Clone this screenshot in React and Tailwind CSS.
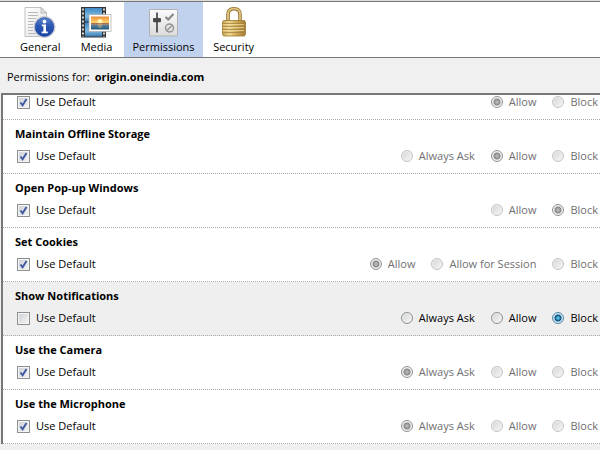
import { useState } from 'react';
import { clsx } from 'clsx';

// --- Icons ---
const GeneralIcon = () => (
  <svg viewBox="0 0 32 32" className="h-8 w-8" aria-hidden="true">
    <defs>
      <linearGradient id="infoBlue" x1="0" y1="0" x2="0" y2="1">
        <stop offset="0" stopColor="#5d86cf" />
        <stop offset="0.450" stopColor="#2c56b4" />
        <stop offset="1" stopColor="#1c46a6" />
      </linearGradient>
      <linearGradient id="sheet" x1="0" y1="0" x2="1" y2="1">
        <stop offset="0" stopColor="#ffffff" />
        <stop offset="1" stopColor="#e2e2e2" />
      </linearGradient>
    </defs>
    <path d="M1 1.500H17L22.500 7V30.500H1Z" fill="url(#sheet)" stroke="#c2c2c2" />
    <path d="M17 1.500V7H22.500Z" fill="#e4e4e4" stroke="#adadad" strokeWidth="0.8" />
    <path d="M4 6.500H14M4 9.500H14M4 12.500H12M4 15.500H10M4 18.500H9M4 21.500H9M4 24.500H9M4 27.500H12" stroke="#b9b9b9" />
    <circle cx="20.500" cy="21" r="10.600" fill="#e6e8ec" stroke="#b9bcc4" strokeWidth="0.7" />
    <circle cx="20.500" cy="21" r="9.400" fill="url(#infoBlue)" stroke="#1f479c" strokeWidth="0.7" />
    <circle cx="20.500" cy="15.600" r="1.900" fill="#fff" />
    <path d="M17.800 18.500H22V25.500H23.700V27.200H17.600V25.500H19.400V20.200H17.800Z" fill="#fff" />
  </svg>
);

const MediaIcon = () => (
  <svg viewBox="0 0 32 32" className="h-8 w-8" aria-hidden="true">
    <defs>
      <linearGradient id="film" x1="0" y1="0" x2="0" y2="1">
        <stop offset="0" stopColor="#3f87c4" />
        <stop offset="0.600" stopColor="#7fbbe2" />
        <stop offset="1" stopColor="#3c7bb0" />
      </linearGradient>
      <linearGradient id="sunset" x1="0" y1="0" x2="0" y2="1">
        <stop offset="0" stopColor="#ef8a3c" />
        <stop offset="0.450" stopColor="#fbd569" />
        <stop offset="0.550" stopColor="#d58a58" />
        <stop offset="0.700" stopColor="#4f7c9c" />
        <stop offset="1" stopColor="#275878" />
      </linearGradient>
    </defs>
    <rect x="1" y="1" width="25" height="30.500" fill="#333638" />
    <rect x="5" y="2" width="17" height="13.500" fill="url(#film)" />
    <rect x="5" y="16.500" width="17" height="14" fill="url(#film)" />
    <path d="M3 2.500V31M24 2.500V31" stroke="#e4e4e4" strokeWidth="1.800" strokeDasharray="2 2" />
    <rect x="9" y="8.500" width="22" height="17" fill="#fff" stroke="#a9a9a9" strokeWidth="0.7" />
    <rect x="11" y="10.500" width="18" height="13" fill="url(#sunset)" />
    <circle cx="20" cy="15.500" r="2.500" fill="#fff6b0" />
    <path d="M11 17.500H29" stroke="#9a6a50" strokeWidth="0.8" />
    <path d="M17.500 19H22.500M18.500 21H21.500" stroke="#f5c777" strokeWidth="0.8" />
  </svg>
);

const PermissionsIcon = () => (
  <svg viewBox="0 0 32 32" className="h-8 w-8" aria-hidden="true">
    <defs>
      <linearGradient id="plate" x1="0" y1="0" x2="0" y2="1">
        <stop offset="0" stopColor="#fbfbfb" />
        <stop offset="1" stopColor="#dcdcdc" />
      </linearGradient>
    </defs>
    <rect x="1.500" y="3.500" width="28" height="26.500" rx="0.500" fill="url(#plate)" stroke="#b2b2b2" />
    <path d="M9 6.500V26.500" stroke="#3c3c3c" strokeWidth="1.600" />
    <rect x="5" y="12" width="8" height="4.200" rx="1" fill="#4a4a4a" />
    <path d="M17.500 11L20.200 13.500L25.500 8" fill="none" stroke="#888" strokeWidth="2.200" />
    <circle cx="21.500" cy="22" r="4" fill="none" stroke="#929292" strokeWidth="1.400" />
    <path d="M18.800 24.700L24.200 19.300" stroke="#929292" strokeWidth="1.400" />
  </svg>
);

const SecurityIcon = () => (
  <svg viewBox="0 0 32 32" className="h-8 w-8" aria-hidden="true">
    <defs>
      <linearGradient id="brass" x1="0" y1="0" x2="1" y2="0">
        <stop offset="0" stopColor="#c9a452" />
        <stop offset="0.300" stopColor="#ecd792" />
        <stop offset="0.600" stopColor="#d0ab58" />
        <stop offset="1" stopColor="#a37c33" />
      </linearGradient>
    </defs>
    <path d="M10 17V8.500C10 4.500 12 2.700 16 2.700S22 4.500 22 8.500V17" fill="none" stroke="#95712d" strokeWidth="3.600" />
    <path d="M10 17V8.500C10 4.500 12 2.700 16 2.700S22 4.500 22 8.500V17" fill="none" stroke="#dfc582" strokeWidth="1.800" />
    <path d="M5.500 14.500H26.500L27.500 16V28L26.500 30H5.500L4.500 28V16Z" fill="url(#brass)" stroke="#a17b31" strokeWidth="0.8" />
    <path d="M5 17.500H27M5 20.500H27M5 23.500H27M5 26.500H27" stroke="#a7813a" strokeWidth="0.8" />
    <path d="M5 18.500H26M5 21.500H26M5 24.500H26" stroke="#f0dfa5" strokeWidth="0.7" />
  </svg>
);

// --- Data ---
const TABS = [
  { name: 'General', Icon: GeneralIcon, width: 'min-w-14' },
  { name: 'Media', Icon: MediaIcon, width: 'min-w-14' },
  { name: 'Permissions', Icon: PermissionsIcon, width: 'min-w-14' },
  { name: 'Security', Icon: SecurityIcon, width: 'min-w-[62px]' },
];

const PERMISSIONS = [
  { id: 'plugins', options: ['Allow', 'Block'], value: 'Allow', useDefault: true },
  { id: 'offline', title: 'Maintain Offline Storage', options: ['Always Ask', 'Allow', 'Block'], value: 'Allow', useDefault: true },
  { id: 'popup', title: 'Open Pop-up Windows', options: ['Allow', 'Block'], value: 'Block', useDefault: true },
  { id: 'cookies', title: 'Set Cookies', options: ['Allow', 'Allow for Session', 'Block'], value: 'Allow', useDefault: true },
  { id: 'notifications', title: 'Show Notifications', options: ['Always Ask', 'Allow', 'Block'], value: 'Block', useDefault: false },
  { id: 'camera', title: 'Use the Camera', options: ['Always Ask', 'Allow', 'Block'], value: 'Always Ask', useDefault: true },
  { id: 'microphone', title: 'Use the Microphone', options: ['Always Ask', 'Allow', 'Block'], value: 'Always Ask', useDefault: true },
];

// --- Controls ---
function CheckBox({ label, checked, onChange }) {
  return (
    <label className="flex items-center gap-1.5">
      <span className="grid h-[13px] w-[13px]">
        <input
          type="checkbox"
          checked={checked}
          onChange={onChange}
          className="col-start-1 row-start-1 h-[13px] w-[13px] appearance-none border border-[#8e8f8f] bg-linear-to-br from-[#cbcfd5] to-[#f6f6f6] shadow-[inset_0_0_0_1px_#f4f4f4]"
        />
        {checked && (
          <svg viewBox="0 0 13 13" className="pointer-events-none col-start-1 row-start-1 h-[13px] w-[13px]" aria-hidden="true">
            <path d="M3.500 6.500L5.600 9.300L9.500 3" fill="none" stroke="#4058a0" strokeWidth="1.900" />
          </svg>
        )}
      </span>
      {label}
    </label>
  );
}

function Radio({ name, label, checked, disabled, onChange }) {
  return (
    <label className={clsx('flex items-center gap-1.5 whitespace-nowrap', disabled && 'text-[#707070]')}>
      <input
        type="radio"
        name={name}
        checked={checked}
        disabled={disabled}
        onChange={onChange}
        className={clsx(
          'h-3 w-3 shrink-0 appearance-none rounded-full border',
          !checked && 'bg-linear-to-br from-[#d2d4d6] to-[#f8f8f8] shadow-[inset_0_0_0_1px_#f0f0f0]',
          !checked && (disabled ? 'border-[#c4c4c4]' : 'border-[#8e8f8f]'),
          checked && disabled && 'border-[#929292] bg-[radial-gradient(circle,#b5b5b5_0_1px,#858585_3px,#f0f0f0_4px)]',
          checked && !disabled && 'border-[#5488a8] bg-[radial-gradient(circle,#4fb8e4_0_1px,#0b4a74_3px,#cbe6f3_4px)]'
        )}
      />
      {label}
    </label>
  );
}

function PermissionRow({ item, onToggle, onSelect }) {
  return (
    <li
      className={clsx(
        'border-b border-dotted border-[#aaa] pr-0.5 pb-2.5 pl-3',
        item.title && 'pt-1.5',
        !item.useDefault && 'bg-[#efefef]'
      )}
    >
      {item.title && <h2 className="mb-[7px] text-[11px] leading-4 font-bold">{item.title}</h2>}
      <div className="flex items-center justify-between pl-0.5 leading-[14px]">
        <CheckBox label="Use Default" checked={item.useDefault} onChange={() => onToggle(item.id)} />
        <div className="flex items-center gap-4">
          {item.options.map((option) => (
            <Radio
              key={option}
              name={item.id}
              label={option}
              checked={item.value === option}
              disabled={item.useDefault}
              onChange={() => onSelect(item.id, option)}
            />
          ))}
        </div>
      </div>
    </li>
  );
}

export default function App() {
  const [activeTab, setActiveTab] = useState('Permissions');
  const [permissions, setPermissions] = useState(PERMISSIONS);

  const handleToggle = (id) => {
    setPermissions(permissions.map((p) => (p.id === id ? { ...p, useDefault: !p.useDefault } : p)));
  };

  const handleSelect = (id, value) => {
    setPermissions(permissions.map((p) => (p.id === id ? { ...p, value } : p)));
  };

  return (
    <div className="min-h-screen bg-[#f0f0f0] font-['Open_Sans','Noto_Sans',sans-serif] text-[11px] text-black">
      {/* Toolbar */}
      <nav className="border-t border-[#dcdcd8]">
        <div className="flex border-y border-[#777] bg-white pl-3">
          {TABS.map(({ name, Icon, width }) => (
            <button
              key={name}
              type="button"
              onClick={() => setActiveTab(name)}
              className={clsx(
                'flex flex-col items-center px-2 pt-1 pb-0.5 text-[11px] leading-[17px]',
                width,
                activeTab === name && 'bg-[#c1d2ee]'
              )}
            >
              <Icon />
              {name}
            </button>
          ))}
        </div>
      </nav>

      {/* Site */}
      <p className="flex gap-[5px] px-[7px] pt-[11px] pb-2 leading-4">
        <span>Permissions for:</span>
        <strong>origin.oneindia.com</strong>
      </p>

      {/* Permission list */}
      <ul className="ml-px border-t-2 border-l-2 border-[#777] bg-white">
        {permissions.map((item) => (
          <PermissionRow key={item.id} item={item} onToggle={handleToggle} onSelect={handleSelect} />
        ))}
      </ul>
    </div>
  );
}
